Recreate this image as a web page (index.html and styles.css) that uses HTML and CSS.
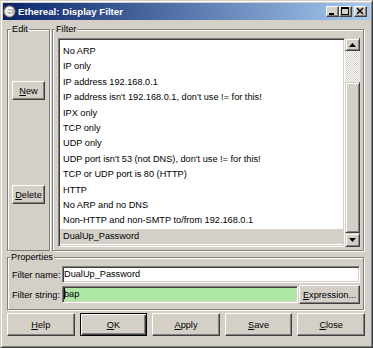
FILE: index.html
```html
<!DOCTYPE html>
<html>
<head>
<meta charset="utf-8">
<title>Ethereal: Display Filter</title>
<link rel="stylesheet" href="styles.css">
</head>
<body>
<div class="window">
  <div class="titlebar">
    <svg class="appicon" viewBox="0 0 13 13" width="13" height="13">
      <circle cx="6.5" cy="6.5" r="6" fill="#b8b8b8" stroke="#3a3a3a" stroke-width="1"/>
      <path d="M9.5 4.2 A3.6 3.6 0 1 0 9.6 8.6" fill="none" stroke="#fff" stroke-width="1.6"/>
      <path d="M4.2 6.3 H9.2" stroke="#fff" stroke-width="1.3"/>
    </svg>
    <span class="title">Ethereal: Display Filter</span>
    <div class="tbtns">
      <span class="tbtn"><svg viewBox="0 0 11 9" width="11" height="9"><rect x="2" y="6" width="5" height="2" fill="#000"/></svg></span>
      <span class="tbtn"><svg viewBox="0 0 11 9" width="11" height="9"><rect x="1.5" y="0.5" width="7" height="7" fill="none" stroke="#000"/><rect x="1" y="0" width="8" height="2" fill="#000"/></svg></span>
      <span class="tbtn close"><svg viewBox="0 0 11 9" width="11" height="9"><path d="M2 1 L8 7 M8 1 L2 7" stroke="#000" stroke-width="1.5"/></svg></span>
    </div>
  </div>
  <div class="content">
    <div class="toprow">
      <fieldset class="frame edit">
        <legend>Edit</legend>
        <button class="btn side new"><u>N</u>ew</button>
        <button class="btn side delete"><u>D</u>elete</button>
      </fieldset>
      <fieldset class="frame filter">
        <legend>Filter</legend>
        <div class="listwrap">
          <ul class="list">
            <li>No ARP</li>
            <li>IP only</li>
            <li>IP address 192.168.0.1</li>
            <li>IP address isn't 192.168.0.1, don't use != for this!</li>
            <li>IPX only</li>
            <li>TCP only</li>
            <li>UDP only</li>
            <li>UDP port isn't 53 (not DNS), don't use != for this!</li>
            <li>TCP or UDP port is 80 (HTTP)</li>
            <li>HTTP</li>
            <li>No ARP and no DNS</li>
            <li>Non-HTTP and non-SMTP to/from 192.168.0.1</li>
            <li class="selected">DualUp_Password</li>
          </ul>
          <div class="scrollbar">
            <div class="sb-btn up"><svg viewBox="0 0 7 4" width="7" height="4"><polygon points="3.5,0 7,4 0,4" fill="#000"/></svg></div>
            <div class="sb-track"></div>
            <div class="sb-thumb"></div>
            <div class="sb-btn down"><svg viewBox="0 0 7 4" width="7" height="4"><polygon points="0,0 7,0 3.5,4" fill="#000"/></svg></div>
          </div>
        </div>
      </fieldset>
    </div>
    <fieldset class="frame props">
      <legend>Properties</legend>
      <div class="propgrid">
        <span class="plabel">Filter name:</span>
        <div class="field name">DualUp_Password</div>
        <span class="plabel">Filter string:</span>
        <div class="strrow">
          <div class="field string"><span class="caret"></span>bap</div>
          <button class="btn expr"><u>E</u>xpression...</button>
        </div>
      </div>
    </fieldset>
    <div class="actions">
      <button class="btn act"><u>H</u>elp</button>
      <button class="btn act default"><u>O</u>K</button>
      <button class="btn act"><u>A</u>pply</button>
      <button class="btn act"><u>S</u>ave</button>
      <button class="btn act"><u>C</u>lose</button>
    </div>
  </div>
</div>
</body>
</html>
```

FILE: styles.css
```css
* { box-sizing: border-box; }
html, body { margin: 0; padding: 0; }
body {
  width: 373px;
  height: 348px;
  overflow: hidden;
  background: #d4d0c8;
  font-family: "Liberation Sans", Arial, sans-serif;
  font-size: 9.2px;
  color: #000;
}
.window {
  width: 373px;
  height: 348px;
  border: 1px solid;
  border-color: #d4d0c8 #404040 #404040 #d4d0c8;
  box-shadow: inset 1px 1px 0 #fff, inset -1px -1px 0 #808080;
  padding: 2px;
  background: #d4d0c8;
  display: flex;
  flex-direction: column;
}
.titlebar {
  height: 17px;
  flex: none;
  background: linear-gradient(to right, #0a246a, #a6caf0);
  display: flex;
  align-items: center;
  padding: 0 3px 0 0;
  color: #fff;
}
.appicon { flex: none; margin: 0 2px 0 0; }
.title {
  flex: 1;
  font-weight: bold;
  font-size: 9.7px;
  white-space: nowrap;
}
.tbtns { display: flex; align-items: center; }
.tbtn {
  width: 13px;
  height: 11px;
  background: #d4d0c8;
  border: 1px solid;
  border-color: #fff #404040 #404040 #fff;
  box-shadow: inset -1px -1px 0 #808080;
  display: flex;
  align-items: center;
  justify-content: center;
}
.tbtn svg { display: block; }
.tbtn.close { margin-left: 2px; }

.content {
  flex: 1;
  padding: 3px 6px 0 4px;
  display: flex;
  flex-direction: column;
}
.toprow {
  display: flex;
  gap: 2px;
  height: 228px;
  flex: none;
}
fieldset.frame {
  margin: 0;
  min-width: 0;
  border: 1px solid #808080;
  box-shadow: inset 1px 1px 0 #fff, 1px 1px 0 #fff;
}
fieldset.frame legend {
  padding: 0 1px;
  height: 12px;
  line-height: 13px;
  background: #d4d0c8;
}
.edit {
  width: 43px;
  padding: 0;
  display: flex;
  flex-direction: column;
  align-items: center;
}
.edit legend { margin-left: 3px; }
.filter {
  width: 312px;
  padding: 3px 3px 3px 5px;
}
.filter legend { margin-left: -3px; }

.btn {
  appearance: none;
  font: inherit;
  color: #000;
  background: #d4d0c8;
  border: 1px solid;
  border-color: #fff #404040 #404040 #fff;
  box-shadow: inset -1px -1px 0 #808080;
  padding: 0;
  margin: 0;
  text-align: center;
  white-space: nowrap;
}
.side { width: 33px; height: 19px; }
.new { margin-top: 46px; }
.delete { margin-top: 85px; }

.listwrap {
  display: flex;
  height: 209px;
}
.list {
  flex: 1;
  margin: 0;
  list-style: none;
  background: #fff;
  border: 1px solid;
  border-color: #808080 #fff #fff #808080;
  box-shadow: inset 1px 1px 0 #404040, inset -1px -1px 0 #d4d0c8;
  padding: 5px 1px 0 1px;
  overflow: hidden;
}
.list li {
  height: 15.4px;
  line-height: 15.4px;
  padding-left: 3px;
  white-space: nowrap;
}
.list li.selected { background: #d4d0c8; }

.scrollbar {
  width: 15px;
  flex: none;
  display: flex;
  flex-direction: column;
}
.sb-btn, .sb-thumb {
  background: #d4d0c8;
  border: 1px solid;
  border-color: #d4d0c8 #404040 #404040 #d4d0c8;
  box-shadow: inset 1px 1px 0 #fff, inset -1px -1px 0 #808080;
}
.sb-btn {
  display: flex;
  align-items: center;
  justify-content: center;
  flex: none;
}
.sb-btn svg { display: block; }
.sb-btn.up { height: 13px; }
.sb-btn.down { height: 14px; }
.sb-track {
  height: 31px;
  flex: none;
  background: repeating-conic-gradient(#fff 0 25%, #d4d0c8 0 50%) 0 0 / 2px 2px;
}
.sb-thumb { flex: 1; }

.props {
  height: 59px;
  flex: none;
  padding: 3px 3px 5px 4px;
}
.props legend { margin-left: -2px; }
.propgrid {
  display: grid;
  grid-template-columns: 50px 1fr;
  row-gap: 2px;
  align-items: center;
}
.plabel { white-space: nowrap; }
.field {
  height: 17px;
  border: 1px solid;
  border-color: #808080 #fff #fff #808080;
  box-shadow: inset 1px 1px 0 #404040, inset -1px -1px 0 #d4d0c8;
  padding: 0 2px 0 1px;
  line-height: 15px;
  white-space: nowrap;
  background: #fff;
}
.strrow {
  display: flex;
  align-items: center;
  gap: 1px;
}
.field.string {
  flex: 1;
  background: #aee6a4;
}
.caret {
  display: inline-block;
  width: 1px;
  height: 11px;
  background: #000;
  vertical-align: -2px;
  margin-right: -1px;
}
.expr { width: 61px; height: 19px; }

.actions {
  display: flex;
  gap: 5px;
  height: 23px;
  margin: 3px -1px 0 0;
  flex: none;
}
.act { flex: 1; height: 23px; }
.act.default {
  border: 1px solid #000;
  box-shadow: inset 1px 1px 0 #fff, inset -1px -1px 0 #404040, inset -2px -2px 0 #808080;
}
```
